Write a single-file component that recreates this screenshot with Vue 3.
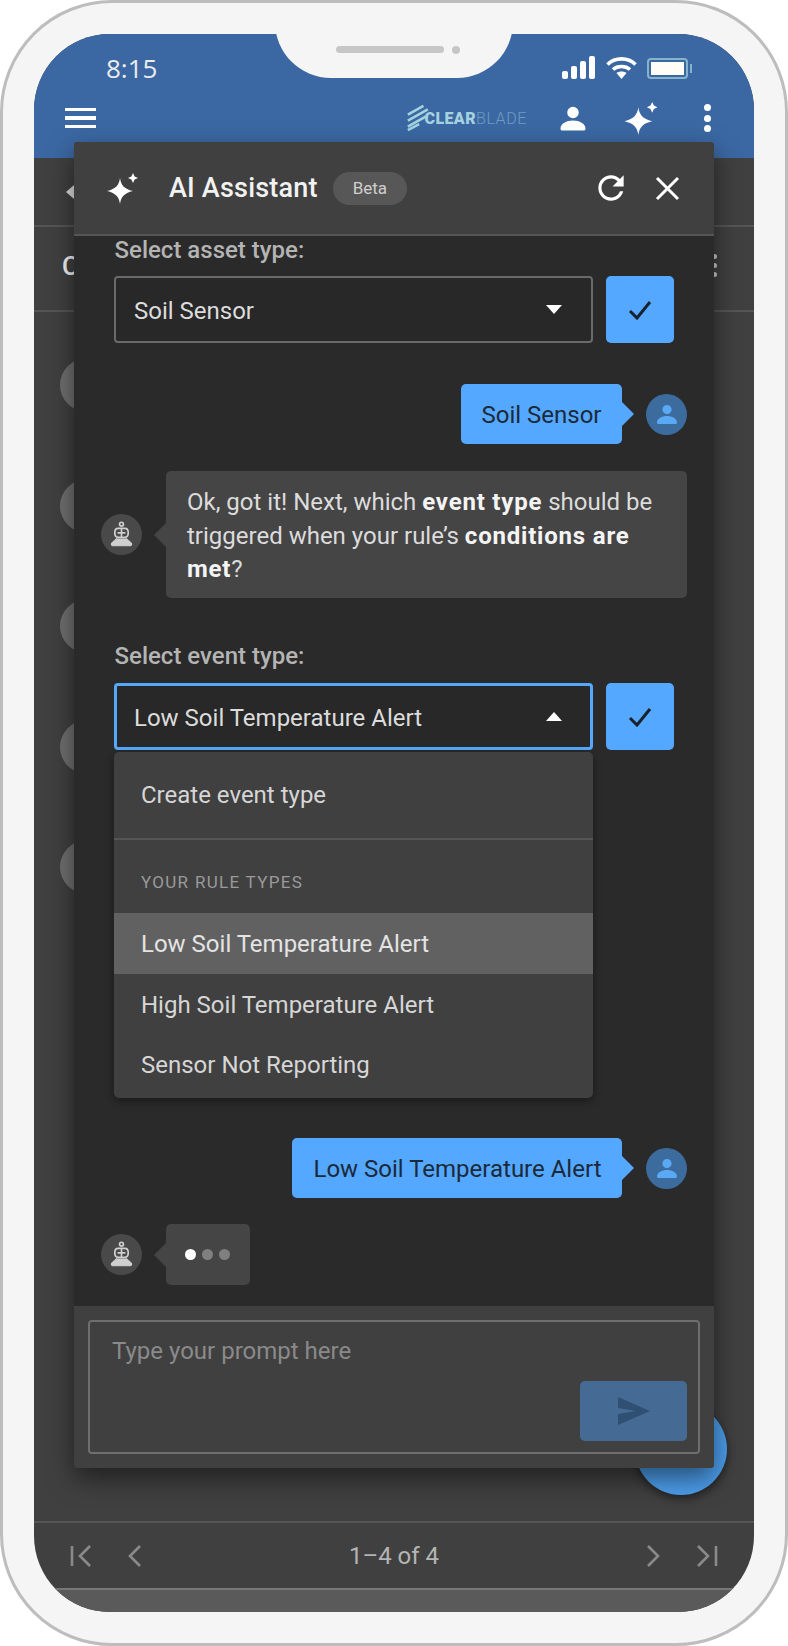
<script setup>
const listRows = [1, 2, 3, 4, 5];
const ruleTypes = ['Low Soil Temperature Alert', 'High Soil Temperature Alert', 'Sensor Not Reporting'];
const sparkle = 'M13 5C14 12 17 16 26 18C17 20 14 24 13 31C12 24 9 20 0 18C9 16 12 12 13 5ZM26 0L27.6 3.4L31 5L27.6 6.6L26 10L24.4 6.6L21 5L24.4 3.4Z';
const person = 'M12 3a4.6 4.6 0 1 1 0 9.2a4.6 4.6 0 0 1 0-9.2ZM2 20.5c0-4 5-6.5 10-6.5s10 2.5 10 6.5c0 .8-.6 1.5-1.5 1.5h-17c-.9 0-1.5-.7-1.5-1.5Z';
</script>

<template>
  <div class="phone">
    <div class="screen">
      <header class="appbar">
        <div class="status">
          <span class="clock">8:15</span>
          <div class="status-icons">
            <svg width="34" height="24" viewBox="0 0 34 24" fill="#fff">
              <rect x="0" y="15" width="6" height="8" rx="2" />
              <rect x="9" y="10" width="6" height="13" rx="2" />
              <rect x="18" y="5" width="6" height="18" rx="2" />
              <rect x="27" y="0" width="6" height="23" rx="2" />
            </svg>
            <svg width="31" height="24" viewBox="0 0 31 24" fill="none" stroke="#fff" stroke-width="3.6">
              <path d="M1.5 8.5C9 1 22 1 29.5 8.5" />
              <path d="M7 13.5C11.5 9.5 19.5 9.5 24 13.5" />
              <path d="M10.5 17L15.5 23L20.5 17C18 15 13 15 10.5 17Z" fill="#fff" stroke="none" />
            </svg>
            <div class="battery"><i></i></div>
          </div>
        </div>
        <div class="toolbar">
          <div class="burger"><i></i><i></i><i></i></div>
          <div class="logo">
            <svg class="logo-mark" width="26" height="30" viewBox="0 0 26 30" fill="none" stroke="#a4d2df" stroke-width="3">
              <path d="M1 11L19 1M1 18L24 5M1 25L24 12M1 29L14 22" />
            </svg>
            <span class="logo-clear">CLEAR</span><span class="logo-blade">BLADE</span>
          </div>
          <svg class="bar-person" width="30" height="30" viewBox="0 0 24 24" fill="#fff"><path :d="person" /></svg>
          <svg class="bar-spark" width="34" height="33" viewBox="0 0 31 31" fill="#fff"><path :d="sparkle" /></svg>
          <div class="kebab"><i></i><i></i><i></i></div>
        </div>
      </header>

      <main class="page">
        <div class="subbar"><span class="back"></span></div>
        <div class="titlerow">
          <span class="title">C</span>
          <div class="row-dots"><i></i><i></i><i></i></div>
        </div>
        <div class="list">
          <div v-for="row in listRows" :key="row" class="list-row"><span class="row-avatar"></span></div>
        </div>
        <footer class="pager">
          <div class="pager-icons">
            <svg width="22" height="22" viewBox="0 0 22 22" fill="none" stroke="#8a8a8a" stroke-width="2.6"><path d="M2 1V21M20 1L10 11L20 21" /></svg>
            <svg width="13" height="22" viewBox="0 0 13 22" fill="none" stroke="#8a8a8a" stroke-width="2.6"><path d="M12 1L2 11L12 21" /></svg>
          </div>
          <span class="pager-text">1–4 of 4</span>
          <div class="pager-icons">
            <svg width="13" height="22" viewBox="0 0 13 22" fill="none" stroke="#8a8a8a" stroke-width="2.6"><path d="M1 1L11 11L1 21" /></svg>
            <svg width="22" height="22" viewBox="0 0 22 22" fill="none" stroke="#8a8a8a" stroke-width="2.6"><path d="M2 1L12 11L2 21M20 1V21" /></svg>
          </div>
        </footer>
        <div class="home-bar"></div>
      </main>

      <div class="fab"></div>

      <section class="assistant">
        <div class="assistant-head">
          <svg class="head-spark" width="31" height="31" viewBox="0 0 31 31" fill="#fff"><path :d="sparkle" /></svg>
          <h1>AI Assistant</h1>
          <span class="chip">Beta</span>
          <svg class="head-refresh" width="38" height="38" viewBox="0 0 24 24" fill="#fff">
            <path d="M17.65 6.35C16.2 4.9 14.21 4 12 4c-4.42 0-7.99 3.58-7.99 8s3.57 8 7.99 8c3.73 0 6.84-2.55 7.73-6h-2.08c-.82 2.33-3.04 4-5.65 4-3.31 0-6-2.69-6-6s2.69-6 6-6c1.66 0 3.14.69 4.22 1.78L13 11h7V4l-2.35 2.35z" />
          </svg>
          <svg class="head-close" width="25" height="25" viewBox="0 0 25 25" fill="none" stroke="#fff" stroke-width="3"><path d="M2 2L23 23M23 2L2 23" /></svg>
        </div>

        <div class="chat">
          <label class="field-label first">Select asset type:</label>
          <div class="field">
            <div class="select">
              <span>Soil Sensor</span>
              <i class="caret"></i>
            </div>
            <button class="confirm">
              <svg width="24" height="20" viewBox="0 0 24 20" fill="none" stroke="#17222e" stroke-width="3"><path d="M2 11L9 18L22 2" /></svg>
            </button>
          </div>

          <div class="msg-user soil">
            <div class="bubble-user">Soil Sensor</div>
            <span class="avatar-user">
              <svg width="24" height="24" viewBox="0 0 24 24" fill="#5aa9f5"><path :d="person" /></svg>
            </span>
          </div>

          <div class="msg-bot reply">
            <span class="avatar-bot">
              <svg width="27" height="27" viewBox="0 0 24 24" fill="none" stroke="#d0d0d0" stroke-width="1.5">
                <circle cx="12" cy="2.8" r="1.7" />
                <path d="M9 6.5H15C17 6.5 18 8 18 10.5C18 13 17 14.5 15 14.5H9C7 14.5 6 13 6 10.5C6 8 7 6.5 9 6.5Z" />
                <path d="M12 6.5V14.5M8.5 10.5H15.5" />
                <path d="M8 15.5L3.5 19.5C2.5 20.5 3 22 4.5 22H19.5C21 22 21.5 20.5 20.5 19.5L16 15.5" fill="#d0d0d0" stroke-width="1" />
              </svg>
            </span>
            <div class="bubble-bot text">
              Ok, got it! Next, which <b>event type</b> should be triggered when your rule’s <b>conditions are met</b>?
            </div>
          </div>

          <label class="field-label second">Select event type:</label>
          <div class="field open">
            <div class="select focused">
              <span>Low Soil Temperature Alert</span>
              <i class="caret up"></i>
            </div>
            <button class="confirm">
              <svg width="24" height="20" viewBox="0 0 24 20" fill="none" stroke="#17222e" stroke-width="3"><path d="M2 11L9 18L22 2" /></svg>
            </button>
            <div class="menu">
              <div class="menu-create">Create event type</div>
              <div class="menu-heading">YOUR RULE TYPES</div>
              <div
                v-for="(rule, i) in ruleTypes"
                :key="rule"
                class="menu-item"
                :class="{ active: i === 0 }">
                {{ rule }}
              </div>
            </div>
          </div>

          <div class="msg-user low">
            <div class="bubble-user">Low Soil Temperature Alert</div>
            <span class="avatar-user">
              <svg width="24" height="24" viewBox="0 0 24 24" fill="#5aa9f5"><path :d="person" /></svg>
            </span>
          </div>

          <div class="msg-bot typing">
            <span class="avatar-bot">
              <svg width="27" height="27" viewBox="0 0 24 24" fill="none" stroke="#d0d0d0" stroke-width="1.5">
                <circle cx="12" cy="2.8" r="1.7" />
                <path d="M9 6.5H15C17 6.5 18 8 18 10.5C18 13 17 14.5 15 14.5H9C7 14.5 6 13 6 10.5C6 8 7 6.5 9 6.5Z" />
                <path d="M12 6.5V14.5M8.5 10.5H15.5" />
                <path d="M8 15.5L3.5 19.5C2.5 20.5 3 22 4.5 22H19.5C21 22 21.5 20.5 20.5 19.5L16 15.5" fill="#d0d0d0" stroke-width="1" />
              </svg>
            </span>
            <div class="bubble-bot dots"><i class="on"></i><i></i><i></i></div>
          </div>
        </div>

        <div class="composer">
          <div class="prompt">
            <span class="placeholder">Type your prompt here</span>
            <button class="send">
              <svg width="34" height="30" viewBox="0 0 34 30" fill="#2f4f73"><path d="M1 1L33 15L1 29L1 18L19 15L1 12Z" /></svg>
            </button>
          </div>
        </div>
      </section>
    </div>

    <div class="notch">
      <span class="speaker"></span>
      <span class="camera"></span>
    </div>
  </div>
</template>

<style>
html,
body {
  margin: 0;
  background: #fff;
}
</style>

<style scoped>
.phone {
  position: relative;
  box-sizing: border-box;
  width: 788px;
  height: 1646px;
  padding: 31px;
  background: #f5f5f5;
  border: 3px solid #bdbdbd;
  border-radius: 112px;
  font-family: Roboto, "Liberation Sans", sans-serif;
}

.screen {
  position: relative;
  display: flex;
  flex-direction: column;
  height: 100%;
  overflow: hidden;
  background: #404040;
  border-radius: 76px;
}

.notch {
  position: absolute;
  top: 0;
  left: 272px;
  display: flex;
  align-items: flex-start;
  gap: 8px;
  box-sizing: border-box;
  width: 238px;
  height: 75px;
  padding: 43px 0 0 61px;
  background: #f5f5f5;
  border-radius: 0 0 56px 56px;
}

.speaker {
  width: 108px;
  height: 7px;
  background: #c6c6c6;
  border-radius: 4px;
}

.camera {
  width: 8px;
  height: 8px;
  background: #c6c6c6;
  border-radius: 50%;
}

.appbar {
  flex: none;
  height: 124px;
  background: #3b68a3;
}

.status {
  display: flex;
  align-items: center;
  justify-content: space-between;
  box-sizing: border-box;
  height: 62px;
  padding: 6px 66px 0 72px;
}

.clock {
  font-family: "Open Sans", sans-serif;
  font-size: 26px;
  color: #ececec;
}

.status-icons {
  display: flex;
  align-items: center;
  gap: 10px;
}

.battery {
  position: relative;
  box-sizing: border-box;
  width: 41px;
  height: 21px;
  padding: 2px;
  background: #3b68a3;
  border: 2px solid #86b3cc;
  border-radius: 4px;
}

.battery i {
  display: block;
  height: 100%;
  background: #fffdf5;
}

.battery::after {
  content: "";
  position: absolute;
  top: 4px;
  right: -6px;
  width: 2px;
  height: 9px;
  background: #86b3cc;
}

.toolbar {
  display: flex;
  align-items: center;
  height: 44px;
  padding-left: 31px;
}

.burger {
  display: flex;
  flex-direction: column;
  gap: 5px;
  width: 31px;
}

.burger i {
  height: 3.5px;
  background: #fff;
}

.logo {
  display: flex;
  align-items: center;
  margin-left: 311px;
  width: 120px;
}

.logo-mark {
  margin-right: -5px;
}

.logo-clear {
  font-size: 16px;
  font-weight: 900;
  letter-spacing: 0.4px;
  color: #a4d2df;
}

.logo-blade {
  font-size: 16px;
  font-weight: 300;
  letter-spacing: 0.6px;
  color: #6f9cc2;
}

.bar-person {
  margin-left: 31px;
}

.bar-spark {
  margin-left: 36px;
}

.kebab {
  display: flex;
  flex-direction: column;
  gap: 3.5px;
  margin-left: 46px;
}

.kebab i {
  width: 7px;
  height: 7px;
  background: #fff;
  border-radius: 50%;
}

.page {
  flex: 1;
  display: flex;
  flex-direction: column;
  min-height: 0;
}

.subbar {
  display: flex;
  align-items: center;
  flex: none;
  box-sizing: border-box;
  height: 69px;
  padding-left: 32px;
  border-bottom: 2px solid #555;
}

.back {
  width: 0;
  height: 0;
  border: 7px solid transparent;
  border-right: 8px solid #ddd;
  border-left: 0;
}

.titlerow {
  display: flex;
  align-items: center;
  justify-content: space-between;
  flex: none;
  box-sizing: border-box;
  height: 85px;
  padding: 0 37px 6px 28px;
  border-bottom: 2px solid #555;
}

.title {
  font-size: 26px;
  font-weight: 500;
  color: #f4f4f4;
}

.row-dots {
  display: flex;
  flex-direction: column;
  gap: 4px;
}

.row-dots i {
  width: 5px;
  height: 5px;
  background: #ccc;
  border-radius: 50%;
}

.list {
  flex: 1;
  padding-top: 13px;
}

.list-row {
  display: flex;
  align-items: center;
  height: 120.5px;
  padding-left: 26px;
}

.row-avatar {
  width: 54px;
  height: 54px;
  background: #6f6f6f;
  border-radius: 50%;
}

.pager {
  display: flex;
  align-items: center;
  justify-content: space-between;
  flex: none;
  box-sizing: border-box;
  height: 67px;
  padding: 0 36px;
  border-top: 2px solid #555;
}

.pager-icons {
  display: flex;
  align-items: center;
  gap: 36px;
}

.pager-text {
  font-size: 24px;
  color: #b4b4b4;
}

.home-bar {
  flex: none;
  box-sizing: border-box;
  height: 24px;
  background: #5a5a5a;
  border-top: 2px solid #777;
}

.fab {
  position: absolute;
  top: 1369px;
  left: 601px;
  width: 92px;
  height: 92px;
  background: #4c9dea;
  border-radius: 50%;
  box-shadow: 0 4px 8px rgba(0, 0, 0, 0.45);
}

.assistant {
  position: absolute;
  top: 108px;
  left: 40px;
  display: flex;
  flex-direction: column;
  width: 640px;
  height: 1326px;
  overflow: hidden;
  background: #2a2a2a;
  border-radius: 4px;
  box-shadow: 0 10px 26px rgba(0, 0, 0, 0.5);
}

.assistant-head {
  display: flex;
  align-items: center;
  flex: none;
  box-sizing: border-box;
  height: 94px;
  padding: 0 34px 0 33px;
  background: #404040;
  border-bottom: 2px solid #555;
}

.assistant-head h1 {
  margin: 0 0 0 31px;
  font-size: 27px;
  font-weight: 500;
  letter-spacing: 0.2px;
  color: #f2f2f2;
}

.chip {
  margin-left: 15px;
  padding: 7px 20px;
  font-size: 17px;
  line-height: 19px;
  color: #cfcfcf;
  background: #575757;
  border-radius: 17px;
}

.head-refresh {
  margin-left: auto;
}

.head-close {
  margin-left: 25px;
}

.chat {
  flex: 1;
  min-height: 0;
  padding: 2px 27px 0 26.5px;
  overflow: hidden;
}

.field-label {
  display: block;
  margin-left: 14px;
  font-size: 24px;
  font-weight: 500;
  line-height: 24px;
  color: #b4b4b4;
}

.field-label.second {
  margin-top: 46px;
}

.field {
  position: relative;
  display: flex;
  gap: 13px;
  margin: 14px 13px 0 13.5px;
}

.field.open {
  margin-top: 15px;
}

.select {
  display: flex;
  align-items: center;
  justify-content: space-between;
  flex: 1;
  box-sizing: border-box;
  height: 67px;
  padding: 2px 29px 0 18px;
  font-size: 24px;
  color: #dcdcdc;
  background: #282828;
  border: 2px solid #6a6a6a;
  border-radius: 4px;
}

.select.focused {
  padding: 2px 28px 0 17px;
  border: 3px solid #55a8ff;
}

.caret {
  width: 0;
  height: 0;
  margin-top: -2px;
  border-top: 9px solid #fff;
  border-right: 8px solid transparent;
  border-left: 8px solid transparent;
}

.caret.up {
  border-top: 0;
  border-bottom: 9px solid #fff;
}

.confirm {
  display: flex;
  align-items: center;
  justify-content: center;
  flex: none;
  width: 68px;
  height: 67px;
  padding: 0;
  background: #55a8ff;
  border: 0;
  border-radius: 5px;
}

.menu {
  position: absolute;
  top: 69px;
  left: 0;
  width: 479px;
  padding-bottom: 3px;
  background: #404040;
  border-radius: 5px;
  box-shadow: 0 3px 8px rgba(0, 0, 0, 0.4);
}

.menu-create {
  display: flex;
  align-items: center;
  box-sizing: border-box;
  height: 88px;
  padding-left: 27px;
  font-size: 24px;
  color: #d6d6d6;
  border-bottom: 2px solid #555;
}

.menu-heading {
  display: flex;
  align-items: center;
  height: 73px;
  padding: 10px 0 0 27px;
  box-sizing: border-box;
  font-size: 17px;
  font-weight: 400;
  letter-spacing: 1.3px;
  color: #9a9a9a;
}

.menu-item {
  display: flex;
  align-items: center;
  box-sizing: border-box;
  height: 60.5px;
  padding: 2px 0 0 27px;
  font-size: 24px;
  color: #d6d6d6;
}

.menu-item.active {
  color: #e4e4e4;
  background: #616161;
}

.msg-user {
  display: flex;
  align-items: center;
  justify-content: flex-end;
  gap: 24.5px;
}

.msg-user.soil {
  margin-top: 41px;
}

.msg-user.low {
  margin-top: 388px;
}

.bubble-user {
  position: relative;
  display: flex;
  align-items: center;
  box-sizing: border-box;
  height: 60px;
  padding: 2px 20px 0 21px;
  font-size: 24px;
  color: #1b2a3a;
  background: #55a8ff;
  border-radius: 5px;
}

.bubble-user::after {
  content: "";
  position: absolute;
  top: 18px;
  right: -12px;
  border-top: 12px solid transparent;
  border-bottom: 12px solid transparent;
  border-left: 12px solid #55a8ff;
}

.avatar-user,
.avatar-bot {
  display: flex;
  align-items: center;
  justify-content: center;
  flex: none;
  width: 41px;
  height: 41px;
  border-radius: 50%;
}

.avatar-user {
  background: #3c6c9e;
}

.avatar-bot {
  background: #494949;
}

.msg-bot {
  display: flex;
  align-items: center;
  gap: 24.5px;
}

.msg-bot.reply {
  margin-top: 27px;
}

.msg-bot.typing {
  margin-top: 26px;
}

.bubble-bot {
  position: relative;
  background: #454545;
  border-radius: 5px;
}

.bubble-bot::before {
  content: "";
  position: absolute;
  top: 50%;
  left: -12px;
  margin-top: -12px;
  border-top: 12px solid transparent;
  border-right: 12px solid #454545;
  border-bottom: 12px solid transparent;
}

.bubble-bot.text {
  box-sizing: border-box;
  flex: 1;
  height: 127px;
  padding: 15px 21px 0;
  font-size: 24px;
  line-height: 33.5px;
  color: #dcdcdc;
}

.bubble-bot.text b {
  font-weight: 700;
  letter-spacing: 0.8px;
  color: #f4f4f4;
}

.bubble-bot.dots {
  display: flex;
  align-items: center;
  gap: 6px;
  box-sizing: border-box;
  width: 84px;
  height: 61px;
  padding-left: 19px;
}

.dots i {
  width: 11px;
  height: 11px;
  background: #808080;
  border-radius: 50%;
}

.dots i.on {
  background: #fff;
}

.composer {
  flex: none;
  box-sizing: border-box;
  height: 162px;
  padding: 14px;
  background: #404040;
}

.prompt {
  position: relative;
  box-sizing: border-box;
  height: 134px;
  padding: 15px 22px;
  border: 2px solid #6e6e6e;
  border-radius: 4px;
}

.placeholder {
  font-size: 24px;
  color: #8a8a8a;
}

.send {
  position: absolute;
  right: 11px;
  bottom: 11px;
  display: flex;
  align-items: center;
  justify-content: center;
  width: 107px;
  height: 60px;
  padding: 0;
  background: #456b94;
  border: 0;
  border-radius: 5px;
}
</style>
